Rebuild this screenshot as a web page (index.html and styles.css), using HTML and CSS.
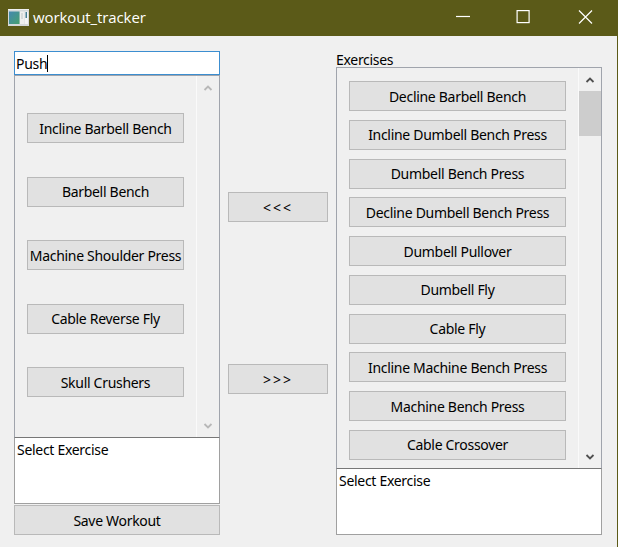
FILE: index.html
```html
<!DOCTYPE html>
<html lang="en">
<head>
<meta charset="utf-8">
<title>workout_tracker</title>
<link rel="stylesheet" href="styles.css">
</head>
<body>
<div class="window">
  <header class="titlebar">
    <svg class="app-icon" width="21" height="17" viewBox="0 0 21 17">
      <defs><linearGradient id="g" x1="0" y1="0" x2="1" y2="1"><stop offset="0" stop-color="#4488b0"/><stop offset="1" stop-color="#46a070"/></linearGradient></defs>
      <rect width="21" height="17" fill="#d5d9da"/>
      <rect x="1" y="2.5" width="10.5" height="12.5" fill="url(#g)"/>
      <rect x="12" y="2.5" width="4" height="12.5" fill="#eeefee"/>
      <path d="M13 5h2M13 7h2M13 9h2" stroke="#bcc4c5"/>
      <rect x="16.5" y="2.5" width="3.5" height="12.5" fill="#f3f4f4"/>
      <rect x="17.5" y="3" width="1.5" height="6" fill="#487f93"/>
      <path d="M0 .5h21" stroke="#eef0f2"/>
    </svg>
    <h1 class="title">workout_tracker</h1>
    <svg class="controls" width="140" height="20" viewBox="0 0 140 20" fill="none" stroke="#fff" stroke-width="1.2">
      <path d="M2 9.5h14"/><rect x="63.1" y="3.6" width="12" height="12"/><path d="M125 3.5l13 13M138 3.5l-13 13"/>
    </svg>
  </header>
  <main class="content">
    <section class="column workout">
      <div class="name-input">Push<span class="caret"></span></div>
      <div class="scroll-area">
        <div class="list">
          <button>Incline Barbell Bench</button>
          <button>Barbell Bench</button>
          <button>Machine Shoulder Press</button>
          <button>Cable Reverse Fly</button>
          <button>Skull Crushers</button>
        </div>
        <div class="scrollbar disabled">
          <svg width="10" height="8" viewBox="0 0 10 8"><path d="M1.5 6L5 2.5 8.5 6"/></svg>
          <svg width="10" height="8" viewBox="0 0 10 8"><path d="M1.5 2L5 5.5 8.5 2"/></svg>
        </div>
      </div>
      <div class="details">Select Exercise</div>
      <button class="save">Save Workout</button>
    </section>
    <section class="transfer">
      <button>&lt;&lt;&lt;</button>
      <button>&gt;&gt;&gt;</button>
    </section>
    <section class="column exercises">
      <div class="label">Exercises</div>
      <div class="scroll-area">
        <div class="list">
          <button>Decline Barbell Bench</button>
          <button>Incline Dumbell Bench Press</button>
          <button>Dumbell Bench Press</button>
          <button>Decline Dumbell Bench Press</button>
          <button>Dumbell Pullover</button>
          <button>Dumbell Fly</button>
          <button>Cable Fly</button>
          <button>Incline Machine Bench Press</button>
          <button>Machine Bench Press</button>
          <button>Cable Crossover</button>
        </div>
        <div class="scrollbar">
          <svg width="10" height="8" viewBox="0 0 10 8"><path d="M1.5 6L5 2.5 8.5 6"/></svg>
          <div class="thumb"></div>
          <svg width="10" height="8" viewBox="0 0 10 8"><path d="M1.5 2L5 5.5 8.5 2"/></svg>
        </div>
      </div>
      <div class="details">Select Exercise</div>
    </section>
  </main>
</div>
</body>
</html>
```
FILE: styles.css
```css
* { box-sizing: border-box; }
body { margin: 0; }
.window {
  width: 618px;
  height: 547px;
  display: flex;
  flex-direction: column;
  overflow: hidden;
  background: #f0f0f0;
  color: #000;
  font: 14px/20px "Noto Sans", sans-serif;
  letter-spacing: -0.3px;
}
.titlebar {
  height: 36px;
  flex: none;
  display: flex;
  align-items: center;
  padding: 0 24px 2px 8px;
  background: #5b5a18;
  color: #fff;
}
.title { margin: 0 auto 0 4px; font: 15px/20px "Open Sans", sans-serif; letter-spacing: -0.1px; }
.content {
  flex: 1;
  display: flex;
  padding: 15px 15px 12px 14px;
  border-right: 1px solid #5b5a18;
}
.column { display: flex; flex-direction: column; }
.workout { width: 206px; }
.exercises { width: 266px; margin-left: 8px; }
.name-input {
  height: 24px;
  display: flex;
  align-items: center;
  padding: 1px 0 0 1px;
  border: 1px solid #3c8ed0;
  background: #fff;
}
.caret { width: 1px; height: 17px; background: #000; }
.label { height: 16px; line-height: 18px; }
.scroll-area { display: flex; border: 1px solid #a0a4ac; border-bottom-color: #777; }
.workout .scroll-area { height: 363px; }
.exercises .scroll-area { height: 402px; }
.list { flex: 1; min-width: 0; display: flex; flex-direction: column; justify-content: space-between; }
.workout .list { padding: 37px 12px 40px; }
.exercises .list { padding: 13px 12px 8px; }
button {
  height: 30px;
  margin: 0;
  padding: 1px 0 0;
  border: 1px solid #b9b9b9;
  background: #e1e1e1;
  color: inherit;
  font: inherit;
  letter-spacing: inherit;
  white-space: nowrap;
}
.scrollbar {
  flex: none;
  width: 23px;
  display: flex;
  flex-direction: column;
  align-items: stretch;
  padding: 8px 0 7px;
  border-left: 1px solid #fafafa;
}
.scrollbar svg {
  align-self: center;
  fill: none;
  stroke: #505050;
  stroke-width: 1.8;
}
.scrollbar svg:last-child { margin-top: auto; }
.disabled svg { stroke: #b8b8b8; }
.thumb { height: 45px; margin-top: 7px; background: #cdcdcd; }
.details {
  height: 66px;
  padding: 2px;
  border: 1px solid #a0a0a0;
  border-top: 0;
  background: #fff;
}
.transfer {
  width: 100px;
  margin-left: 8px;
  padding: 141px 0;
  display: flex;
  flex-direction: column;
  gap: 142px;
}
.transfer button { letter-spacing: 2px; }
.save { margin-top: 1px; }
```
